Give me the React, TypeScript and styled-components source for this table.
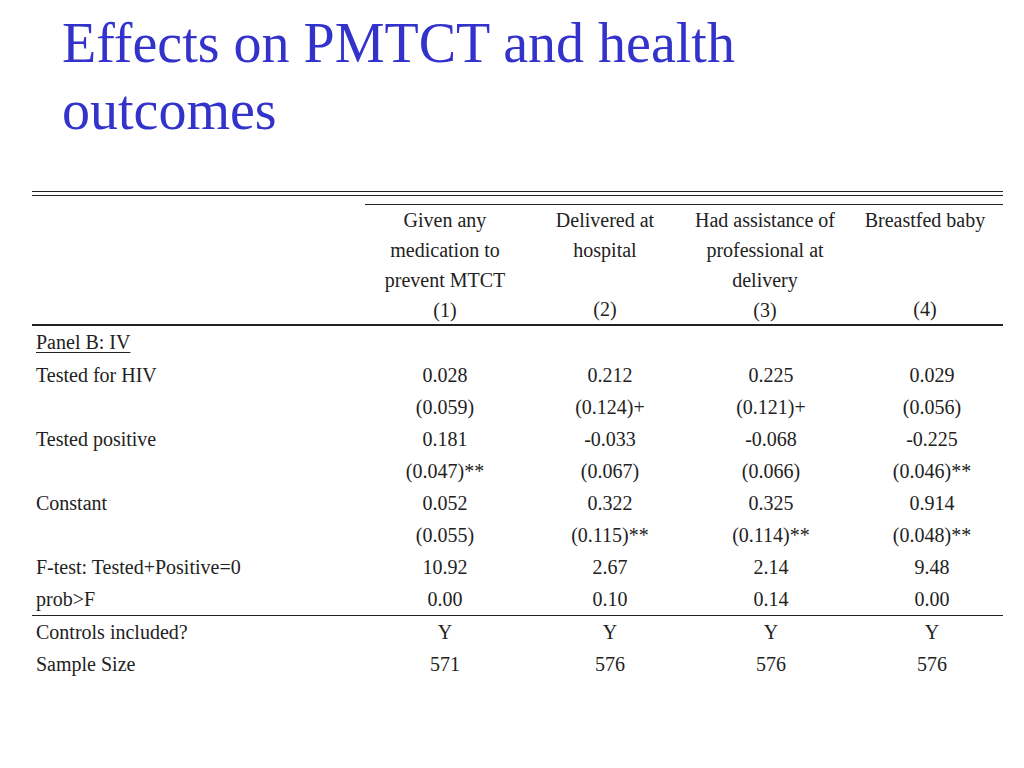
import React from "react";
import styled, { createGlobalStyle } from "styled-components";

const Global = createGlobalStyle`
  html, body { margin: 0; padding: 0; background: #ffffff; }
  body { width: 1024px; height: 768px; overflow: hidden; }
`;

const Slide = styled.div`
  width: 1024px;
  height: 768px;
  background: #ffffff;
  font-family: "Liberation Serif", "Times New Roman", serif;
`;

const Title = styled.h1`
  margin: 0;
  padding: 10px 0 0 62px;
  font-family: "Liberation Serif", "Times New Roman", serif;
  font-weight: normal;
  font-size: 56px;
  line-height: 67px;
  color: #3333cc;
`;

const Table = styled.div`
  margin: 47px 0 0 32px;
  width: 971px;
  color: #222222;
  font-size: 20px;
`;

const DoubleRule = styled.div`
  height: 2.5px;
  border-top: 1.5px solid #222;
  border-bottom: 1.5px solid #222;
`;

const Header = styled.div`
  display: grid;
  grid-template-columns: 333px 1fr;
  padding-top: 8px;
`;

const HeaderGroup = styled.div`
  grid-column: 2;
  display: grid;
  grid-template-columns: repeat(4, 160px);
  border-top: 1.5px solid #222;
  width: 638px;
`;

const HeadCell = styled.div`
  height: 119px;
  display: flex;
  flex-direction: column;
  justify-content: space-between;
  align-items: center;
  text-align: center;
  line-height: 30px;
`;

const HeadLine = styled.span`
  display: block;
  white-space: nowrap;
`;

const Rule = styled.div<{ $w?: number }>`
  height: 0;
  border-top: ${(p) => p.$w ?? 1.5}px solid #222;
`;

const PanelRow = styled.div`
  height: 33px;
  line-height: 32px;
  padding-left: 4px;
`;

const PanelLabel = styled.span`
  text-decoration: underline;
  text-decoration-thickness: 1px;
  text-underline-offset: 3px;
`;

const Row = styled.div`
  display: grid;
  grid-template-columns: 330px 166px 164px 158px 164px;
  height: 32px;
  line-height: 32px;
  white-space: nowrap;
`;

const Label = styled.div`
  padding-left: 4px;
`;

const Value = styled.div`
  text-align: center;
`;

const headers: string[][] = [
  ["Given any", "medication to", "prevent MTCT"],
  ["Delivered at", "hospital"],
  ["Had assistance of", "professional at", "delivery"],
  ["Breastfed baby"],
];

type RowData = [string, string, string, string, string];

const upper: RowData[] = [
  ["Tested for HIV", "0.028", "0.212", "0.225", "0.029"],
  ["", "(0.059)", "(0.124)+", "(0.121)+", "(0.056)"],
  ["Tested positive", "0.181", "-0.033", "-0.068", "-0.225"],
  ["", "(0.047)**", "(0.067)", "(0.066)", "(0.046)**"],
  ["Constant", "0.052", "0.322", "0.325", "0.914"],
  ["", "(0.055)", "(0.115)**", "(0.114)**", "(0.048)**"],
  ["F-test: Tested+Positive=0", "10.92", "2.67", "2.14", "9.48"],
  ["prob>F", "0.00", "0.10", "0.14", "0.00"],
];

const lower: RowData[] = [
  ["Controls included?", "Y", "Y", "Y", "Y"],
  ["Sample Size", "571", "576", "576", "576"],
];

const renderRow = (r: RowData, i: number) => (
  <Row key={i}>
    <Label>{r[0]}</Label>
    {r.slice(1).map((v, j) => (
      <Value key={j}>{v}</Value>
    ))}
  </Row>
);

export default function App() {
  return (
    <Slide>
      <Global />
      <Title>
        Effects on PMTCT and health
        <br />
        outcomes
      </Title>
      <Table>
        <DoubleRule />
        <Header>
          <HeaderGroup>
            {headers.map((lines, i) => (
              <HeadCell key={i}>
                <div>
                  {lines.map((l, k) => (
                    <HeadLine key={k}>{l}</HeadLine>
                  ))}
                </div>
                <HeadLine>({i + 1})</HeadLine>
              </HeadCell>
            ))}
          </HeaderGroup>
        </Header>
        <Rule $w={2} />
        <PanelRow>
          <PanelLabel>Panel B: IV</PanelLabel>
        </PanelRow>
        {upper.map(renderRow)}
        <Rule $w={1.5} />
        {lower.map(renderRow)}
      </Table>
    </Slide>
  );
}
